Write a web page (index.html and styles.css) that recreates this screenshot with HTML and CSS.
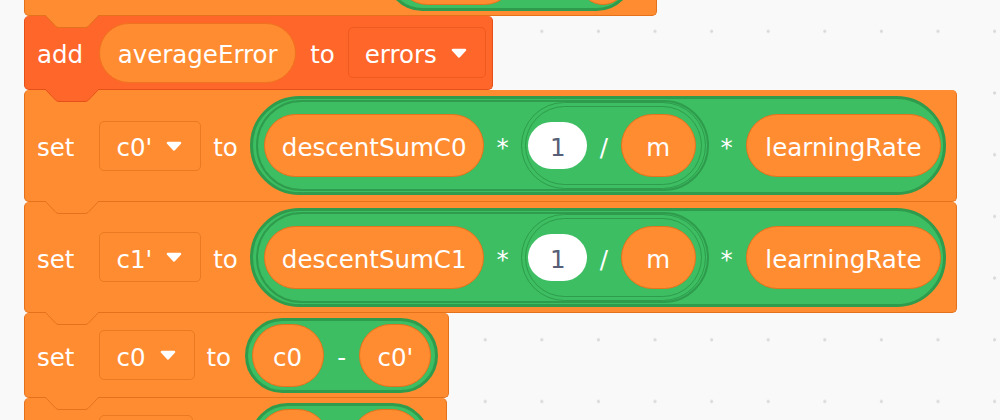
FILE: index.html
```html
<!DOCTYPE html>
<html lang="en">
<head>
    <meta charset="UTF-8">
    <meta name="viewport" content="width=device-width, initial-scale=1.0">
    <title>Gradient descent script</title>
    <link rel="stylesheet" href="styles.css">
</head>
<body>
    <div class="stack">
        <!-- block that is cut off by the top of the window -->
        <div class="block var block-short">
            <div class="op op-short top-op">
                <span class="pill top-pill-a"></span>
                <span class="pill top-pill-b"></span>
            </div>
            <svg class="tab" width="54" height="14"><path d="M0 0 L11 11.5 Q12.2 12.5 14 12.5 L40 12.5 Q41.8 12.5 43 11.5 L54 0"/></svg>
        </div>

        <div class="block list block-add">
            <span class="word">add</span>
            <span class="pill pill-add">averageError</span>
            <span class="word word-to">to</span>
            <span class="dropdown dd-add">errors <svg class="arrow" width="16" height="10"><path d="M2 2 L14 2 L8 8.5 Z"/></svg></span>
            <svg class="tab" width="54" height="14"><path d="M0 0 L11 11.5 Q12.2 12.5 14 12.5 L40 12.5 Q41.8 12.5 43 11.5 L54 0"/></svg>
        </div>

        <div class="block var block-tall">
            <span class="word">set</span>
            <span class="dropdown">c0' <svg class="arrow" width="16" height="10"><path d="M2 2 L14 2 L8 8.5 Z"/></svg></span>
            <span class="word word-to">to</span>
            <div class="op op-big">
                <div class="op-inner">
                    <span class="pill pill-long">descentSumC0</span>
                    <span class="sym">*</span>
                    <div class="ring">
                        <div class="ring-inner">
                            <span class="num">1</span>
                            <span class="sym">/</span>
                            <span class="pill pill-m">m</span>
                        </div>
                    </div>
                </div>
                <span class="sym sym-outer">*</span>
                <span class="pill pill-rate">learningRate</span>
            </div>
            <svg class="tab" width="54" height="14"><path d="M0 0 L11 11.5 Q12.2 12.5 14 12.5 L40 12.5 Q41.8 12.5 43 11.5 L54 0"/></svg>
        </div>

        <div class="block var block-tall">
            <span class="word">set</span>
            <span class="dropdown">c1' <svg class="arrow" width="16" height="10"><path d="M2 2 L14 2 L8 8.5 Z"/></svg></span>
            <span class="word word-to">to</span>
            <div class="op op-big">
                <div class="op-inner">
                    <span class="pill pill-long">descentSumC1</span>
                    <span class="sym">*</span>
                    <div class="ring">
                        <div class="ring-inner">
                            <span class="num">1</span>
                            <span class="sym">/</span>
                            <span class="pill pill-m">m</span>
                        </div>
                    </div>
                </div>
                <span class="sym sym-outer">*</span>
                <span class="pill pill-rate">learningRate</span>
            </div>
            <svg class="tab" width="54" height="14"><path d="M0 0 L11 11.5 Q12.2 12.5 14 12.5 L40 12.5 Q41.8 12.5 43 11.5 L54 0"/></svg>
        </div>

        <div class="block var block-short">
            <span class="word">set</span>
            <span class="dropdown">c0 <svg class="arrow" width="16" height="10"><path d="M2 2 L14 2 L8 8.5 Z"/></svg></span>
            <span class="word word-to">to</span>
            <div class="op op-short">
                <span class="pill pill-c">c0</span>
                <span class="sym">-</span>
                <span class="pill pill-c">c0'</span>
            </div>
            <svg class="tab" width="54" height="14"><path d="M0 0 L11 11.5 Q12.2 12.5 14 12.5 L40 12.5 Q41.8 12.5 43 11.5 L54 0"/></svg>
        </div>

        <!-- next block, only its top edge is in view -->
        <div class="block var block-short block-next">
            <span class="word-gap"></span>
            <span class="dropdown dd-empty"></span>
            <div class="op op-short op-next">
                <span class="pill pill-c"></span>
                <span class="pill pill-c pill-next"></span>
            </div>
        </div>
    </div>
</body>
</html>
```

FILE: styles.css
```css
body {
    margin: 0;
    height: 420px;
    overflow: hidden;
    background-color: #f9f9f9;
    background-image: radial-gradient(circle, #dadada 1.3px, transparent 1.9px);
    background-size: 56.6px 61.7px;
    background-position: 4.2px 0.5px;
    font-family: "DejaVu Sans", sans-serif;
    font-size: 24.5px;
    color: #fff;
}
.stack {
    margin-top: -69px;
    padding-left: 24px;
    display: flex;
    flex-direction: column;
    align-items: flex-start;
}

/* stack blocks */
.block {
    position: relative;
    display: flex;
    align-items: center;
    box-sizing: border-box;
    padding: 0 10px 0 12px;
    border: 1px solid;
    border-top: none;
    border-radius: 5px;
    line-height: 1;
}
.var {
    background-color: #ff8c31;
    border-color: #e4721c;
}
.list {
    background-color: #ff6629;
    border-color: #e6511a;
}
.block-short {
    height: 85px;
    padding-right: 10px;
}
.block-next {
    padding-right: 16px;
}
.block-add {
    height: 74px;
    padding-right: 6px;
}
.block-tall {
    height: 112px;
}
.block-tall + .block-tall {
    height: 111px;
}
.tab {
    position: absolute;
    left: 20px;
    top: 100%;
    z-index: 2;
    overflow: visible;
}
.var .tab path {
    fill: #ff8c31;
    stroke: #e4721c;
}
.list .tab path {
    fill: #ff6629;
    stroke: #e6511a;
}

/* text sits a little low in scratch blocks */
.word,
.sym {
    padding-top: 6px;
}
.word-to {
    margin-left: 12px;
}
.block-add .word-to {
    margin-left: 14px;
}
.word-gap {
    width: 37px;
}

/* dropdowns */
.dropdown {
    display: flex;
    align-items: center;
    box-sizing: border-box;
    height: 50px;
    margin-left: 25px;
    padding: 6px 18px 0 16px;
    border: 1px solid #e97a22;
    border-radius: 5px;
}
.dd-add {
    height: 51px;
    margin-left: 13px;
    border-color: #ee5a1f;
}
.dd-empty {
    width: 94px;
}
.arrow {
    margin-left: 14px;
    margin-bottom: 6px;
}
.arrow path {
    fill: #fff;
    stroke: #fff;
    stroke-width: 2.5;
    stroke-linejoin: round;
}

/* reporters */
.pill {
    display: flex;
    align-items: center;
    justify-content: center;
    box-sizing: border-box;
    height: 63px;
    padding: 6px 17.5px 0;
    background-color: #ff8c31;
    border: 1px solid #e4731d;
    border-radius: 32px;
}
.pill-long {
    padding: 6px 16.5px 0;
}
.pill-rate {
    padding: 6px 18.5px 0;
}
.pill-add {
    height: 60px;
    margin-left: 16px;
    border-color: #f07320;
}
.pill-m {
    width: 75px;
    padding: 6px 0 0;
}
.pill-c {
    width: 72px;
    padding: 6px 0 0;
}
.num {
    display: flex;
    align-items: center;
    justify-content: center;
    box-sizing: border-box;
    width: 59px;
    height: 47px;
    padding-top: 6px;
    background-color: #fff;
    border-radius: 24px;
    color: #575e75;
}
.sym {
    margin: 0 12.5px;
}
.sym-outer {
    margin: 0 13px 0 12px;
}

.op {
    display: flex;
    align-items: center;
    box-sizing: border-box;
    background-color: #3dbe62;
    border: 3px solid #2e9c4c;
    border-radius: 60px;
}
.op-big {
    height: 99px;
    margin-left: 12.5px;
    padding: 0 2px 0 3px;
}
.op-inner {
    display: flex;
    align-items: center;
    box-sizing: border-box;
    height: 91px;
    padding: 0 1px 0 6px;
    border: 2px solid #2e9c4c;
    border-radius: 46px;
}
.ring {
    box-sizing: border-box;
    height: 87px;
    padding: 3px;
    border: 1.5px solid #2e9c4c;
    border-radius: 44px;
}
.ring-inner {
    display: flex;
    align-items: center;
    box-sizing: border-box;
    height: 100%;
    padding: 0 5px 0 2px;
    border: 1.5px solid #2e9c4c;
    border-radius: 40px;
}
.op-short {
    height: 75px;
    margin-left: 13.5px;
    padding: 0 4px;
}
.op-short .sym {
    margin: 0 13.5px;
}
.op-next {
    margin-left: 57px;
}
.pill-next {
    margin-left: 22px;
}
.top-op {
    margin-left: 348px;
    margin-right: 12px;
    padding: 0 4px 0 8px;
}
.top-pill-a {
    width: 120px;
}
.top-pill-b {
    width: 48px;
    margin-left: 63px;
}
```
